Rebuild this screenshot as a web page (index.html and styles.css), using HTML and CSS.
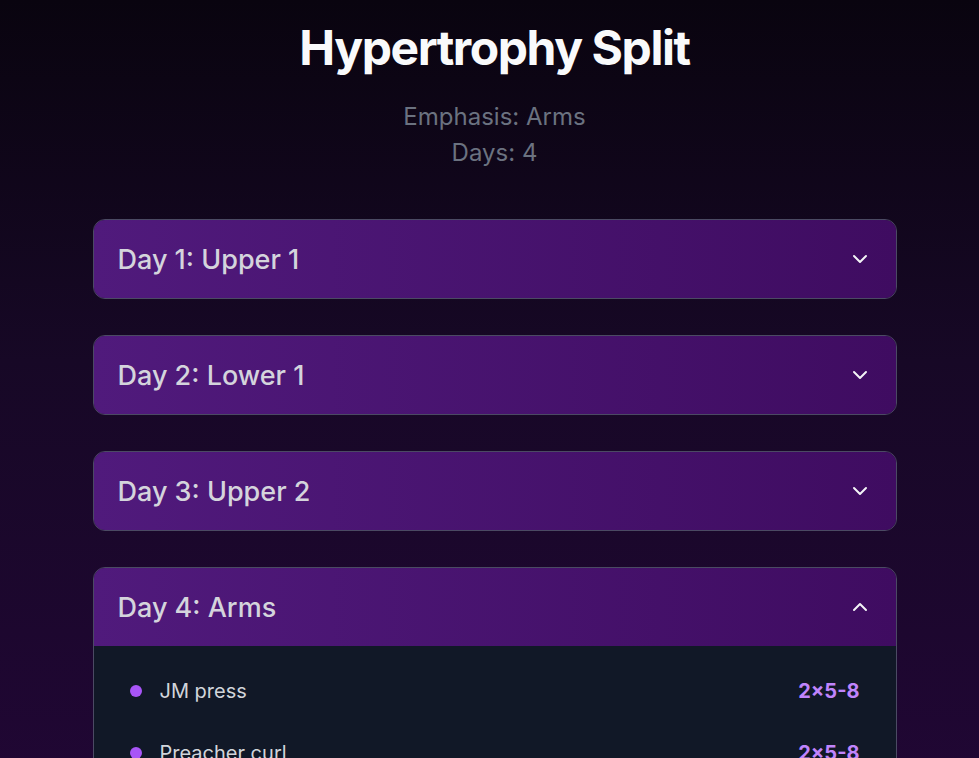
FILE: index.html
```html
<!DOCTYPE html>
<html lang="en">
<head>
    <meta charset="UTF-8">
    <meta name="viewport" content="width=device-width, initial-scale=1.0">
    <title>Hypertrophy Split</title>
    <link rel="stylesheet" href="styles.css">
</head>
<body>
    <div class="page">
        <div class="container">
            <h1>Hypertrophy Split</h1>
            <div class="meta">
                <p>Emphasis: Arms</p>
                <p>Days: 4</p>
            </div>

            <div class="days">
                <div class="day">
                    <button class="day-header">
                        <span>Day 1: Upper 1</span>
                        <svg class="chevron" viewBox="0 0 24 24"><path d="M6 9l6 6 6-6"/></svg>
                    </button>
                </div>
                <div class="day">
                    <button class="day-header">
                        <span>Day 2: Lower 1</span>
                        <svg class="chevron" viewBox="0 0 24 24"><path d="M6 9l6 6 6-6"/></svg>
                    </button>
                </div>
                <div class="day">
                    <button class="day-header">
                        <span>Day 3: Upper 2</span>
                        <svg class="chevron" viewBox="0 0 24 24"><path d="M6 9l6 6 6-6"/></svg>
                    </button>
                </div>
                <div class="day open">
                    <button class="day-header">
                        <span>Day 4: Arms</span>
                        <svg class="chevron" viewBox="0 0 24 24"><path d="M6 15l6-6 6 6"/></svg>
                    </button>
                    <ul class="exercises">
                        <li><span class="dot"></span><span class="name">JM press</span><span class="sets">2×5-8</span></li>
                        <li><span class="dot"></span><span class="name">Preacher curl</span><span class="sets">2×5-8</span></li>
                        <li><span class="dot"></span><span class="name">Overhead extension</span><span class="sets">2×8-12</span></li>
                    </ul>
                </div>
            </div>
        </div>
    </div>
</body>
</html>
```

FILE: styles.css
```css
html, body {
    margin: 0;
    padding: 0;
}
body {
    font-family: Inter, "Noto Sans", sans-serif;
    background: linear-gradient(180deg, #09040f 0%, #170826 40%, #230638 100%);
    min-height: 100vh;
    color: #d1d5db;
}
.page {
    padding: 22px 0 40px 10px;
}
.container {
    max-width: 804px;
    margin: 0 auto;
}
h1 {
    margin: 0;
    text-align: center;
    font-size: 48px;
    line-height: 52px;
    font-weight: 700;
    letter-spacing: -0.03em;
    color: #f9fafb;
}
.meta {
    margin-top: 25px;
    text-align: center;
    color: #6b7280;
    font-size: 24px;
}
.meta p {
    margin: 0;
    line-height: 36px;
}
.days {
    margin-top: 48px;
    display: flex;
    flex-direction: column;
    gap: 36px;
}
.day {
    border: 1px solid #4b4a63;
    border-radius: 12px;
    overflow: hidden;
}
.day-header {
    display: flex;
    align-items: center;
    justify-content: space-between;
    width: 100%;
    height: 78px;
    padding: 0 24px;
    border: none;
    background: linear-gradient(90deg, #501a7c 0%, #3f0c61 100%);
    color: #d4d4dc;
    font-family: inherit;
    font-size: 27px;
    font-weight: 500;
    cursor: pointer;
}
.chevron {
    width: 24px;
    height: 24px;
    fill: none;
    stroke: #f3f4f6;
    stroke-width: 2;
    stroke-linecap: round;
    stroke-linejoin: round;
}
.exercises {
    list-style: none;
    margin: 0;
    padding: 19px 36px 20px 36px;
    background: #111827;
    display: flex;
    flex-direction: column;
    gap: 10px;
}
.exercises li {
    display: flex;
    align-items: center;
    padding: 12px 0;
    line-height: 28px;
    font-size: 20px;
}
.dot {
    width: 12px;
    height: 12px;
    border-radius: 50%;
    background: #a855f7;
    margin-right: 18px;
}
.name {
    flex: 1;
    color: #d1d5db;
}
.sets {
    color: #c084fc;
    font-weight: 700;
}
```
